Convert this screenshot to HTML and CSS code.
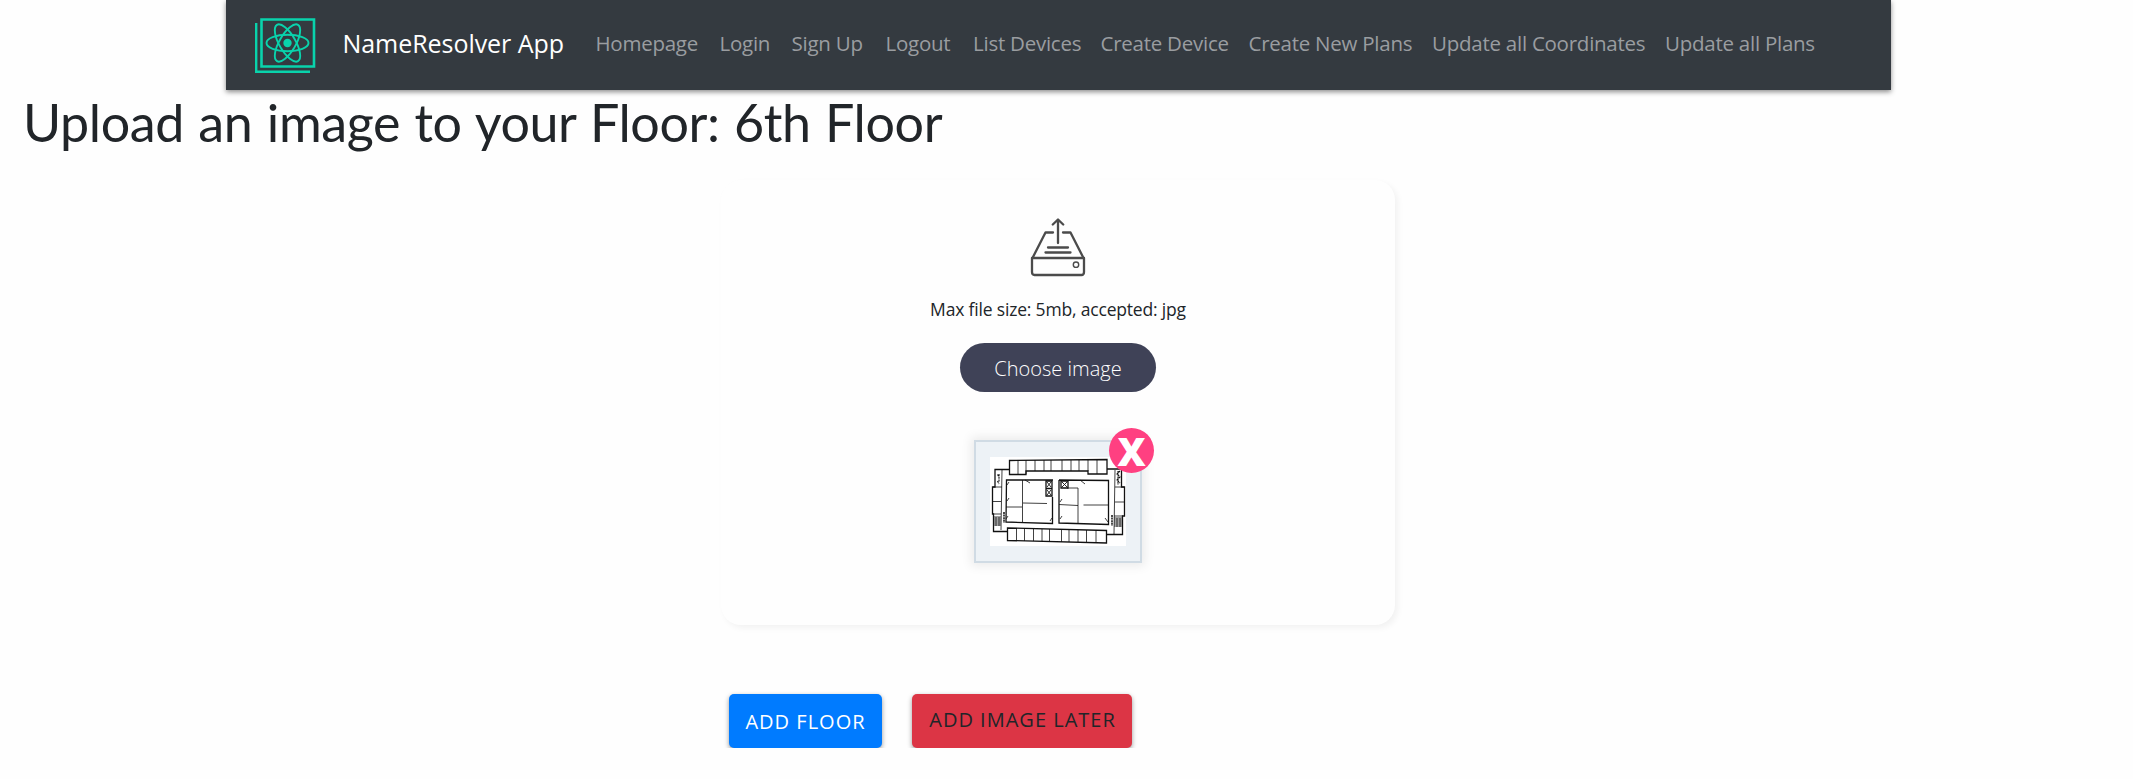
FILE: index.html
```html
<!DOCTYPE html>
<html lang="en">
<head>
<meta charset="utf-8">
<title>NameResolver App</title>
<link rel="stylesheet" href="styles.css">
</head>
<body>
<nav class="navbar">
  <svg class="logo" width="62" height="57" viewBox="0 0 62 57" fill="none" stroke="#09d3ac">
    <path d="M7.500 2.500H60V49.500H7.500Z" stroke-width="2.600"/>
    <path d="M2.200 6V54.700H56" stroke-width="2.400"/>
    <g stroke-width="1.900">
      <ellipse cx="33.500" cy="26" rx="21" ry="8.200"/>
      <ellipse cx="33.500" cy="26" rx="21" ry="8.200" transform="rotate(60 33.500 26)"/>
      <ellipse cx="33.500" cy="26" rx="21" ry="8.200" transform="rotate(120 33.500 26)"/>
    </g>
    <circle cx="33.500" cy="26" r="4.200" fill="#09d3ac" stroke="none"/>
  </svg>
  <a class="brand">NameResolver App</a>
  <ul class="links">
    <li class="homepage">Homepage</li>
    <li class="login">Login</li>
    <li class="signup">Sign Up</li>
    <li class="logout">Logout</li>
    <li class="list">List Devices</li>
    <li class="create">Create Device</li>
    <li class="plans">Create New Plans</li>
    <li class="coords">Update all Coordinates</li>
    <li class="update">Update all Plans</li>
  </ul>
</nav>
<main>
  <h1 class="title">Upload an image to your Floor: 6th Floor</h1>
  <section class="uploader">
    <svg class="tray" width="56" height="60" viewBox="0 0 56 60" fill="none" stroke="#4b4b4b" stroke-width="2.300" stroke-linecap="round" stroke-linejoin="round">
      <path d="M28 25V2M22.800 6.500L28 1.500L33.200 6.500"/>
      <path d="M23 14.500H15.500L2.500 40M33 14.500H40.500L53.500 40"/>
      <path d="M18 29.500H38M15.500 34.500H40.500"/>
      <path d="M2 40H54V54Q54 57 51.500 57H4.500Q2 57 2 54Z"/>
      <circle cx="46" cy="46.700" r="2.700" stroke-width="1.400"/>
    </svg>
    <p class="hint">Max file size: 5mb, accepted: jpg</p>
    <button class="choose">Choose image</button>
    <div class="preview">
      <svg class="plan" width="136" height="89" viewBox="0 0 136 89" fill="none" stroke="#111">
        <rect width="136" height="89" fill="#fff" stroke="none"/>
        <g stroke-width="1.300">
          <path d="M19.500 3.500L117 2.500V17H98V14H36V17.500H19.500Z"/>
          <path d="M17.500 71L116.500 73.500V86L17.500 83.500Z"/>
          <path d="M19.500 12.500H5V30H2.500V57H3.500V74.500H17.500M117 12H131.500V30H134.500V59H132.500V77.500H116.500"/>
          <path d="M63 23H16.500L16 65L62.500 66.500V40M69 23L118.500 23.500V67.500L69 66V23"/>
        </g>
        <g stroke-width=".8">
          <path d="M28 3V17M36 3V17M45 3V14M54 3V14M61 3V14M72 3V14M81 3V14M89 3V14M98 3V14M107 3V17"/>
          <path d="M26.500 71V84M34.500 71V84M43.500 72V84M52 72V84M59.500 72V85M71.500 72V85M79 73V85M88 73V85M96.500 73V85M106 73V85"/>
          <path d="M12 13L11 73M3 30H12M3 44.500H11M3 57H11M125 13L124 77M125 30H134M125 45H134M124 59H133"/>
          <path d="M32.500 23V65M16 50H32M33 46L57 46.500M88 31V67M77 31H88M69 47.500L88 48.500M93.500 48H118"/>
          <path d="M35 23L40 26M90 23L95 27M17 28L19 25M17 44L19 41M16 62L18 59M60 64L62 61M70 45L72 42M70 62L72 59M115 61L118 65"/>
          <path d="M3 60H11M3 62H11M3 64H11M3 66H11M3 68H11M6 60V69M9 60V69M124 61H132M124 63H132M124 65H132M124 67H132M124 69H132M127 61V70M130 61V70"/>
        </g>
        <path d="M7.500 17.500L9 20M9 17V25M7.500 24L9 27M128 14V28M130 14L127 17L130 20L127 23L130 26" stroke-width="1.100" stroke-dasharray="2 .7"/>
        <path d="M14 55V66M122 58V69" stroke-width="1.500" stroke-dasharray="2 .6"/>
        <g stroke-width="1.300">
          <path d="M56 24H62V39H56ZM56 31.500H62M71 24H78V31H71Z"/>
          <path d="M57 25L61 30M61 25L57 30M57 33L61 38M61 33L57 38M72 25L77 30M77 25L72 30" stroke-width=".9"/>
        </g>
      </svg>
      <span class="remove">X</span>
    </div>
  </section>
  <div class="actions">
    <button class="btn add">ADD FLOOR</button>
    <button class="btn later">ADD IMAGE LATER</button>
  </div>
</main>
</body>
</html>
```
FILE: styles.css
```css
* { box-sizing: border-box; }
body {
  margin: 0;
  padding-right: 17px;
  background: #fefefe;
  font-family: "Open Sans", "Noto Sans", sans-serif;
  color: #212529;
}
.navbar {
  display: flex;
  align-items: center;
  width: 1665px;
  height: 90px;
  margin: 0 auto;
  padding-left: 28px;
  background: #343a40;
  box-shadow: 0 2px 5px rgba(0, 0, 0, .45);
}
.logo { flex: none; }
.brand {
  width: 250px;
  margin-left: 27px;
  padding-bottom: 4px;
  color: #fff;
  font-size: 25px;
  line-height: 36px;
  letter-spacing: -.05px;
  white-space: nowrap;
}
.links {
  display: flex;
  margin: 0 0 0 3px;
  padding: 0 0 4px;
  list-style: none;
  color: #9a9da0;
  font-size: 20.500px;
  line-height: 30px;
  letter-spacing: -.25px;
  white-space: nowrap;
}
.links li { flex: none; }
.homepage { width: 124px; }
.login { width: 72px; }
.signup { width: 94px; }
.logout { width: 87.500px; }
.list { width: 127.500px; }
.create { width: 148px; }
.plans { width: 183.500px; }
.coords { width: 233px; }
.title {
  margin: 0;
  padding: 0 0 0 23px;
  height: 90px;
  font: 400 52px/64px Lato, sans-serif;
  letter-spacing: -.4px;
  word-spacing: 1.500px;
}
.uploader {
  display: flex;
  flex-direction: column;
  align-items: center;
  width: 674px;
  height: 445px;
  margin: 0 auto;
  padding-top: 38px;
  border-radius: 20px;
  background: #fefefe;
  box-shadow: 3px 3px 6px rgba(0, 0, 0, .05);
}
.tray { flex: none; }
.hint {
  margin: 16px 0 0;
  font-size: 17.500px;
  line-height: 30px;
  letter-spacing: -.18px;
}
.choose {
  width: 196px;
  height: 49px;
  margin-top: 19px;
  padding: 3px 0 0;
  border: 0;
  border-radius: 25px;
  background: #3f4257;
  color: #fff;
  font: 300 20px/30px "Open Sans", sans-serif;
}
.preview {
  position: relative;
  width: 168px;
  height: 123px;
  margin-top: 48px;
  padding: 15px 14px;
  border: 2px solid #d0dbe4;
  background: #edf2f6;
  box-shadow: 0 0 10px 3px rgba(0, 0, 0, .08);
}
.plan { display: block; }
.remove {
  position: absolute;
  top: -14px;
  right: -14px;
  width: 45px;
  height: 45px;
  border-radius: 50%;
  background: #ff4081;
  color: #fff;
  font-size: 39px;
  font-weight: 800;
  line-height: 46px;
  text-align: center;
}
.actions {
  display: flex;
  gap: 30px;
  padding: 69px 0 0 729px;
}
.btn {
  height: 54px;
  border: 0;
  border-radius: 5px;
  font: 400 20px/30px "Open Sans", sans-serif;
  letter-spacing: 1px;
  white-space: nowrap;
  box-shadow: 0 2px 5px rgba(0, 0, 0, .4);
}
.add {
  width: 153px;
  padding: 2px 0 0;
  background: #007bff;
  color: #fff;
}
.later {
  width: 220px;
  padding: 0 0 2px 1px;
  background: #dc3545;
  color: #212529;
}
```
